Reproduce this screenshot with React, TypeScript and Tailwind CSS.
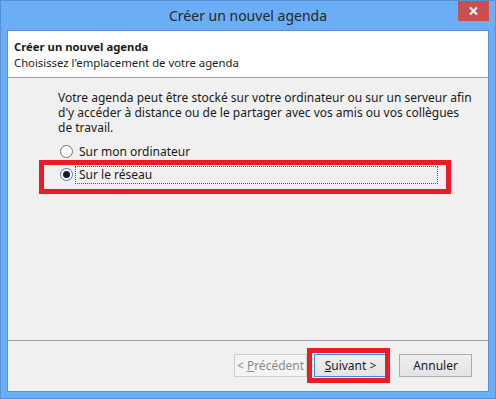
import React from "react";

const font = "font-['Noto_Sans','Liberation_Sans',sans-serif]";

const Radio = ({ checked, focused }: { checked?: boolean; focused?: boolean }) => (
  <span
    className={`flex h-[13px] w-[13px] shrink-0 items-center justify-center rounded-full border bg-white ${
      focused ? "border-[#3c7fe0]" : "border-[#6f6f6f]"
    }`}
  >
    {checked && <span className="h-[7px] w-[7px] rounded-full bg-[#1c1c1c]" />}
  </span>
);

const WizButton = ({
  children,
  disabled,
  primary,
}: {
  children: React.ReactNode;
  disabled?: boolean;
  primary?: boolean;
}) => (
  <button
    disabled={disabled}
    className={`flex h-[23px] w-[73px] items-center justify-center whitespace-nowrap border text-[12px] ${
      disabled
        ? "border-[#cdcdcd] bg-[#f4f4f4] text-[#8a8a8a]"
        : primary
          ? "border-[#3c8de6] bg-gradient-to-b from-[#f0f0f0] to-[#e3e3e3] text-[#1a1a1a]"
          : "border-[#acacac] bg-gradient-to-b from-[#f0f0f0] to-[#e3e3e3] text-[#1a1a1a]"
    }`}
  >
    {children}
  </button>
);

export default function App() {
  return (
    <div className={`relative flex h-[399px] w-[496px] flex-col border border-[#5a8ed2] bg-[#6badf6] ${font}`}>
      {/* title bar */}
      <div className="flex h-[29px] items-center justify-center pb-[1px] text-[14px] text-[#262626]">
        Créer un nouvel agenda
      </div>
      <div className="absolute right-[6px] top-0 flex h-[20px] w-[31px] items-center justify-center bg-[#c75050]">
        <svg width="9" height="8" viewBox="0 0 9 8">
          <path d="M1 0.5 L8 7.5 M8 0.5 L1 7.5" stroke="#fff" strokeWidth="2" />
        </svg>
      </div>

      {/* client */}
      <div className="mx-[6px] mb-[6px] flex flex-1 flex-col border border-[#5a8ed2] bg-[#f0f0f0] text-[12px] text-[#1a1a1a]">
        <div className="h-[47px] border-b border-[#a0a0a0] bg-white pl-[6px] pt-[8px] text-[11.3px] leading-[16px]">
          <div className="font-bold">Créer un nouvel agenda</div>
          <div>Choisissez l'emplacement de votre agenda</div>
        </div>

        <div className="relative flex-1 pl-[50px] pt-[12px]">
          <div className="leading-[15px]">
            <div className="whitespace-nowrap">Votre agenda peut être stocké sur votre ordinateur ou sur un serveur afin</div>
            <div className="whitespace-nowrap">d'y accéder à distance ou de le partager avec vos amis ou vos collègues</div>
            <div>de travail.</div>
          </div>

          <div className="mt-[8px] flex flex-col gap-[6px]">
            <label className="flex h-[17px] items-center pl-[2px]">
              <Radio />
              <span className="ml-[6px]">Sur mon ordinateur</span>
            </label>
            <label className="flex h-[17px] items-center pl-[2px]">
              <Radio checked focused />
              <span className="ml-[2px] flex h-[18px] w-[363px] items-center border border-dotted border-[#555] pl-[3px]">
                Sur le réseau
              </span>
            </label>
          </div>

          {/* annotation */}
          <div className="pointer-events-none absolute left-[31px] top-[82px] h-[34px] w-[412px] border-[5px] border-[#ed1c24]" />
        </div>

        <div className="relative flex h-[51px] items-start justify-end border-t border-[#a0a0a0] pr-[16px] pt-[13px]">
          <WizButton disabled>
            <span>&lt;&nbsp;</span>
            <span className="underline">P</span>
            <span>récédent</span>
          </WizButton>
          <div className="ml-[7px]">
            <WizButton primary>
              <span className="underline">S</span>
              <span>uivant &gt;</span>
            </WizButton>
          </div>
          <div className="ml-[12px]">
            <WizButton>Annuler</WizButton>
          </div>
          <div className="pointer-events-none absolute left-[299px] top-[7px] h-[35px] w-[83px] border-[5px] border-[#ed1c24]" />
        </div>
      </div>
    </div>
  );
}
